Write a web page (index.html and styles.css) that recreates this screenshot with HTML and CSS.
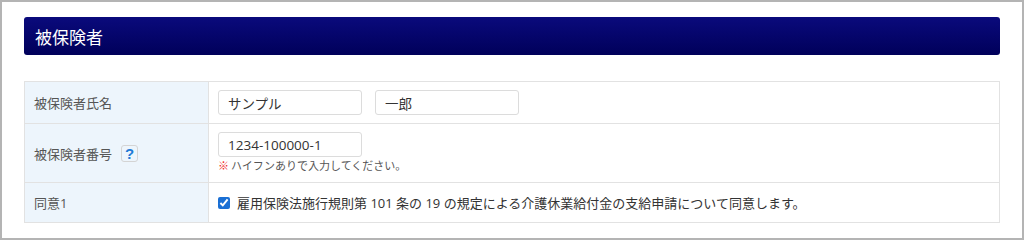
FILE: index.html
```html
<!DOCTYPE html>
<html lang="ja">
<head>
  <meta charset="UTF-8">
  <title>被保険者</title>
  <link rel="stylesheet" href="styles.css">
</head>
<body>
  <div class="frame">
    <h2 class="section-title">被保険者</h2>

    <table class="form-table">
      <tr>
        <th>被保険者氏名</th>
        <td>
          <div class="name-inputs">
            <input type="text" class="text-input" value="サンプル">
            <input type="text" class="text-input" value="一郎">
          </div>
        </td>
      </tr>
      <tr>
        <th>
          <span class="label-with-help">被保険者番号 <span class="help">?</span></span>
        </th>
        <td>
          <input type="text" class="text-input" value="1234-100000-1">
          <p class="note"><span class="mark">※</span>ハイフンありで入力してください。</p>
        </td>
      </tr>
      <tr>
        <th>同意1</th>
        <td>
          <label class="agree">
            <input type="checkbox" checked>
            雇用保険法施行規則第 101 条の 19 の規定による介護休業給付金の支給申請について同意します。
          </label>
        </td>
      </tr>
    </table>
  </div>
</body>
</html>
```

FILE: styles.css
```css
body {
  margin: 0;
  background-color: #fff;
  font-family: "Open Sans", "Noto Sans CJK JP", sans-serif;
  color: #333;
}

.frame {
  width: 1024px;
  height: 240px;
  box-sizing: border-box;
  border: 2px solid #b4b4b4;
  padding: 15px 22px 0 22px;
}

.section-title {
  margin: 0;
  height: 38px;
  padding: 0 11px;
  display: flex;
  align-items: center;
  color: #fff;
  font-size: 17px;
  font-weight: normal;
  border-radius: 3px;
  background: linear-gradient(#0a0a7c, #00005a);
}

.form-table {
  width: 976px;
  margin-top: 26px;
  border-collapse: collapse;
  font-size: 13px;
}

.form-table th,
.form-table td {
  border: 1px solid #e2e2e2;
  padding: 8px 10px 8px 9px;
  text-align: left;
  vertical-align: middle;
}

.form-table th {
  width: 164px;
  background-color: #edf5fc;
  color: #555;
  font-weight: normal;
}

.name-inputs {
  display: flex;
  gap: 13px;
}

.text-input {
  width: 144px;
  height: 25px;
  box-sizing: border-box;
  border: 1px solid #dcdcdc;
  border-radius: 3px;
  padding: 0 9px;
  font-family: inherit;
  font-size: 13.5px;
  color: #333;
  display: block;
}

.label-with-help {
  display: flex;
  align-items: center;
  gap: 9px;
}

.help {
  width: 17px;
  height: 17px;
  box-sizing: border-box;
  border: 1px solid #d4d4d4;
  border-radius: 3px;
  display: flex;
  align-items: center;
  justify-content: center;
  color: #1f7ad6;
  font-family: "Liberation Sans", sans-serif;
  font-weight: bold;
  font-size: 15px;
}

.note {
  margin: 1px 0 0;
  font-size: 11px;
  line-height: 16px;
  color: #555;
}

.mark {
  color: #f02828;
  margin-right: 2px;
}

.agree {
  display: flex;
  align-items: center;
  height: 23px;
  color: #333;
}

.agree input {
  margin: 0 7px 0 0;
  width: 12px;
  height: 12px;
  accent-color: #1a6fd4;
}
```
